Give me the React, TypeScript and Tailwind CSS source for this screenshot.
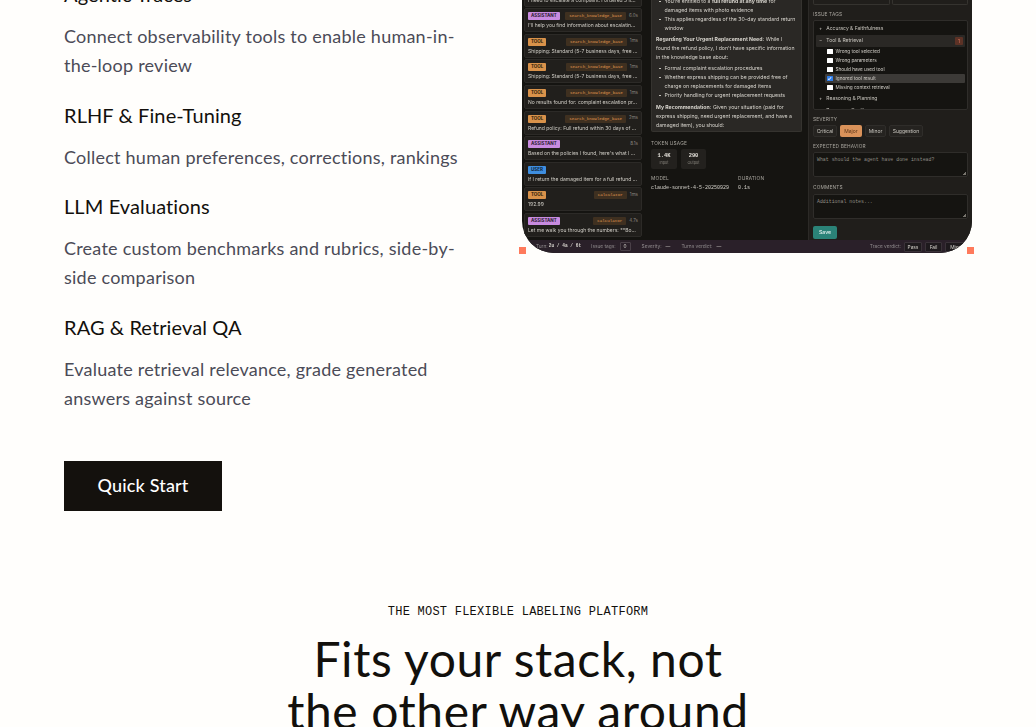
const features = [
  {
    title: 'Agentic Traces',
    body: 'Connect observability tools to enable human-in-the-loop review',
  },
  {
    title: 'RLHF & Fine-Tuning',
    body: 'Collect human preferences, corrections, rankings',
  },
  {
    title: 'LLM Evaluations',
    body: 'Create custom benchmarks and rubrics, side-by-side comparison',
  },
  {
    title: 'RAG & Retrieval QA',
    body: 'Evaluate retrieval relevance, grade generated answers against source',
  },
];

const messages = [
  { role: 'USER', tool: '', time: '', text: 'I need to escalate a complaint. I ordered 3 ite...' },
  { role: 'ASSISTANT', tool: 'search_knowledge_base', time: '6.0s', text: "I'll help you find information about escalating ..." },
  { role: 'TOOL', tool: 'search_knowledge_base', time: '1ms', text: 'Shipping: Standard (5-7 business days, free ...' },
  { role: 'TOOL', tool: 'search_knowledge_base', time: '1ms', text: 'Shipping: Standard (5-7 business days, free ...' },
  { role: 'TOOL', tool: 'search_knowledge_base', time: '1ms', text: 'No results found for: complaint escalation pr...' },
  { role: 'TOOL', tool: 'search_knowledge_base', time: '2ms', text: 'Refund policy: Full refund within 30 days of p...' },
  { role: 'ASSISTANT', tool: '', time: '8.1s', text: "Based on the policies I found, here's what I c..." },
  { role: 'USER', tool: '', time: '', text: 'If I return the damaged item for a full refund ...' },
  { role: 'TOOL', tool: 'calculator', time: '1ms', text: '192.99' },
  { role: 'ASSISTANT', tool: 'calculator', time: '4.7s', text: 'Let me walk you through the numbers: **Boo...' },
];

function roleClass(role: string) {
  if (role === 'ASSISTANT') return 'bg-[#c88be0] text-[#2a1a30]';
  if (role === 'TOOL') return 'bg-[#d9924a] text-[#2a1a08]';
  return 'bg-[#3f8fe0] text-[#0c2238]';
}

function MessageRow({ role, tool, time, text }: (typeof messages)[number]) {
  return (
    <div className="flex h-[24px] shrink-0 flex-col justify-between rounded-[2px] border border-[#2c2a27] bg-[#211f1c] px-[3px] pt-[3px] pb-[2px]">
      <div className="flex h-[8px] items-center justify-between gap-[2px]">
        <span className={`rounded-[1px] px-[3px] text-[4.5px] leading-[8px] font-bold ${roleClass(role)}`}>{role}</span>
        <span className="ml-auto flex items-center gap-[3px]">
          {tool && (
            <span className="rounded-[1px] bg-[#3f3020] px-[4px] font-['Liberation_Mono',monospace] text-[4.2px] leading-[8px] text-[#e09a50]">
              {tool}
            </span>
          )}
          {time && <span className="text-[4.5px] text-[#8a8780]">{time}</span>}
        </span>
      </div>
      <p className="truncate text-[5px] leading-[7px] text-[#cfccc5]">{text}</p>
    </div>
  );
}

function Bullet({ children }: { children: React.ReactNode }) {
  return (
    <li className="flex gap-[4px]">
      <span className="mt-[3.5px] h-[1.5px] w-[1.5px] shrink-0 rounded-full bg-[#d6d3cc]" />
      <span>{children}</span>
    </li>
  );
}

function ConversationCenter() {
  return (
    <div className="flex w-[165px] shrink-0 flex-col border-r border-[#2c2a27] pr-[6px] pl-[7px]">
      <div className="h-[132px] overflow-hidden rounded-b-[2px] border-x border-b border-[#35332f] bg-[#2a2825] px-[4px] text-[5.2px] leading-[9px] text-[#d6d3cc]">
        <ul className="-mt-[3px] pl-[3px]">
          <Bullet>You're entitled to a <b>full refund at any time</b> for damaged items with photo evidence</Bullet>
          <Bullet>This applies regardless of the 30-day standard return window</Bullet>
        </ul>
        <p className="mt-[2px]">
          <b>Regarding Your Urgent Replacement Need:</b> While I found the refund policy, I don't have specific information in the knowledge base about:
        </p>
        <ul className="mt-[2px] pl-[3px]">
          <Bullet>Formal complaint escalation procedures</Bullet>
          <Bullet>Whether express shipping can be provided free of charge on replacements for damaged items</Bullet>
          <Bullet>Priority handling for urgent replacement requests</Bullet>
        </ul>
        <p className="mt-[3px]">
          <b>My Recommendation:</b> Given your situation (paid for express shipping, need urgent replacement, and have a damaged item), you should:
        </p>
      </div>
      <p className="mt-[8px] text-[4.8px] leading-[6px] tracking-[0.04em] text-[#a8a59e]">TOKEN USAGE</p>
      <div className="mt-[3px] flex gap-[4px]">
        <div className="flex h-[20px] w-[26px] flex-col items-center justify-center rounded-[2px] bg-[#23211e]">
          <span className="font-['Liberation_Mono',monospace] text-[5.4px] leading-[8px] font-bold text-[#e6e3dc]">1.4K</span>
          <span className="text-[3.8px] leading-[6px] text-[#85827b]">Input</span>
        </div>
        <div className="flex h-[20px] w-[25px] flex-col items-center justify-center rounded-[2px] bg-[#23211e]">
          <span className="font-['Liberation_Mono',monospace] text-[5.4px] leading-[8px] font-bold text-[#e6e3dc]">290</span>
          <span className="text-[3.8px] leading-[6px] text-[#85827b]">Output</span>
        </div>
      </div>
      <div className="mt-[6px] flex">
        <div className="w-[87px]">
          <p className="text-[4.8px] leading-[6px] tracking-[0.04em] text-[#a8a59e]">MODEL</p>
          <p className="mt-[3px] font-['Liberation_Mono',monospace] text-[5px] leading-[8px] whitespace-nowrap text-[#d6d3cc]">claude-sonnet-4-5-20250929</p>
        </div>
        <div>
          <p className="text-[4.8px] leading-[6px] tracking-[0.04em] text-[#a8a59e]">DURATION</p>
          <p className="mt-[3px] font-['Liberation_Mono',monospace] text-[5px] leading-[8px] text-[#d6d3cc]">0.1s</p>
        </div>
      </div>
    </div>
  );
}

function IssueCheck({ label, checked }: { label: string; checked?: boolean }) {
  return (
    <div className={`flex h-[9px] items-center gap-[3px] rounded-[1px] pl-[2px] ${checked ? 'bg-[#3c3a37]' : ''}`}>
      <span className={`flex h-[5.5px] w-[5.5px] shrink-0 items-center justify-center rounded-[0.5px] ${checked ? 'bg-[#2f7de8]' : 'bg-white'}`}>
        {checked && (
          <svg viewBox="0 0 10 10" className="h-[5px] w-[5px]" fill="none" stroke="white" strokeWidth="2">
            <path d="M2 5.5 4.2 7.5 8 2.5" />
          </svg>
        )}
      </span>
      <span className="text-[4.7px] leading-[9px] text-[#d6d3cc]">{label}</span>
    </div>
  );
}

function FieldBox({ placeholder }: { placeholder: string }) {
  return (
    <div className="relative mt-[3px] h-[25px] rounded-[2px] border border-[#2f2d2a] bg-[#151411] px-[3px] py-[3px] font-['Liberation_Mono',monospace] text-[4.9px] leading-[7px] text-[#8f8c85]">
      {placeholder}
      <span className="absolute right-[1px] bottom-[1px] h-[3px] w-[3px] bg-[linear-gradient(135deg,transparent_50%,#77746d_50%)]" />
    </div>
  );
}

function ReviewPanel() {
  return (
    <div className="flex min-w-0 flex-1 flex-col bg-[#201e1b] px-[4px]">
      <div className="flex gap-[2px]">
        <div className="h-[5px] flex-1 rounded-b-[2px] border border-t-0 border-[#35332f]" />
        <div className="h-[5px] flex-1 rounded-b-[2px] border border-t-0 border-[#35332f]" />
      </div>
      <p className="mt-[6px] text-[4.8px] leading-[6px] tracking-[0.03em] text-[#a8a59e]">ISSUE TAGS</p>
      <div className="mt-[3px] h-[90px] overflow-hidden rounded-[2px] border border-[#2f2d2a] bg-[#151411] px-[2px] pt-[2px]">
        <div className="flex h-[12px] items-center gap-[4px] pl-[3px] text-[5px] text-[#c9c6bf]">
          <span>+</span>Accuracy &amp; Faithfulness
        </div>
        <div className="flex h-[12px] items-center gap-[4px] rounded-[1px] bg-[#2a2825] pl-[3px] text-[5px] text-[#c9c6bf]">
          <span>−</span>Tool &amp; Retrieval
          <span className="mr-[2px] ml-auto rounded-[1px] bg-[#5c3226] px-[3px] text-[4.8px] leading-[8px] text-[#e0775c]">1</span>
        </div>
        <div className="ml-[9px]">
          <IssueCheck label="Wrong tool selected" />
          <IssueCheck label="Wrong parameters" />
          <IssueCheck label="Should have used tool" />
          <IssueCheck label="Ignored tool result" checked />
          <IssueCheck label="Missing context retrieval" />
        </div>
        <div className="mt-[1px] flex h-[12px] items-center gap-[4px] pl-[3px] text-[5px] text-[#c9c6bf]">
          <span>+</span>Reasoning &amp; Planning
        </div>
        <div className="flex h-[12px] items-center gap-[4px] pl-[3px] text-[5px] text-[#c9c6bf]">
          <span>+</span>Response Quality
        </div>
      </div>
      <p className="mt-[6px] text-[4.8px] leading-[6px] tracking-[0.03em] text-[#a8a59e]">SEVERITY</p>
      <div className="mt-[3px] flex h-[12px] gap-[3px] text-[5px] leading-[10px] text-[#c9c6bf]">
        <span className="w-[24px] rounded-[2px] border border-[#2f2d2a] bg-[#252320] text-center">Critical</span>
        <span className="w-[22px] rounded-[2px] bg-[#d9925a] text-center leading-[12px] text-[#5a3418]">Major</span>
        <span className="w-[21px] rounded-[2px] border border-[#2f2d2a] bg-[#252320] text-center">Minor</span>
        <span className="w-[34px] rounded-[2px] border border-[#2f2d2a] bg-[#252320] text-center">Suggestion</span>
      </div>
      <p className="mt-[6px] text-[4.8px] leading-[6px] tracking-[0.03em] text-[#a8a59e]">EXPECTED BEHAVIOR</p>
      <FieldBox placeholder="What should the agent have done instead?" />
      <p className="mt-[7px] h-[7px] text-[4.8px] leading-[6px] tracking-[0.03em] text-[#a8a59e]">COMMENTS</p>
      <FieldBox placeholder="Additional notes..." />
      <span className="mt-[7px] h-[13px] w-[24px] rounded-[2px] bg-[#2b8378] text-center text-[5.2px] leading-[13px] font-medium text-[#e6f2ef]">Save</span>
    </div>
  );
}

function StatusBar() {
  return (
    <div className="flex h-[13px] shrink-0 items-center overflow-hidden bg-[#2a2029] pr-[3px] pl-[14px] text-[4.8px] whitespace-nowrap text-[#8f8a8c]">
      <span>Turn:</span>
      <span className="ml-[1px] font-['Liberation_Mono',monospace] text-[4.5px] font-bold text-[#d6d3cc]">2u / 4a / 6t</span>
      <span className="ml-[10px]">Issue tags:</span>
      <span className="ml-[4px] rounded-[1px] border border-[#4a4048] px-[3px] leading-[7px] text-[#d6d3cc]">0</span>
      <span className="ml-[11px]">Severity:</span>
      <span className="ml-[4px] text-[#d6d3cc]">—</span>
      <span className="ml-[11px]">Turns verdict:</span>
      <span className="ml-[4px] text-[#d6d3cc]">—</span>
      <span className="ml-auto">Trace verdict:</span>
      <span className="ml-[3px] w-[18px] rounded-[1px] border border-[#3a3238] bg-[#1e1a1d] text-center leading-[8px] text-[#d6d3cc]">Pass</span>
      <span className="ml-[3px] w-[17px] rounded-[1px] border border-[#3a3238] bg-[#1e1a1d] text-center leading-[8px] text-[#d6d3cc]">Fail</span>
      <span className="ml-[3px] w-[24px] rounded-[1px] border border-[#3a3238] bg-[#1e1a1d] text-center leading-[8px] text-[#d6d3cc]">Mixed</span>
    </div>
  );
}

export default function App() {
  return (
    <div className="h-[727px] overflow-hidden bg-[#fffefc] font-['Lato',sans-serif] text-[#12100c]">
      {/* Feature list and product shot */}
      <section className="-mt-[21px] flex px-[64px]">
        <div className="w-[396px] shrink-0">
          {features.map((f) => (
            <div key={f.title} className="mb-[20px] last:mb-0">
              <h3 className="text-[20px] leading-[30px] tracking-[0.005em]">{f.title}</h3>
              <p className="mt-[13px] text-[18px] leading-[28.8px] tracking-[0.013em] text-[#4b4b57]">{f.body}</p>
            </div>
          ))}
          <a className="mt-[48px] flex h-[50px] w-[158px] items-center justify-center bg-[#14110d] text-[18px] font-medium tracking-[0.01em] text-white">
            Quick Start
          </a>
        </div>

        <div className="relative ml-[62px] h-[274px] w-[450px] shrink-0">
          <div className="flex h-full flex-col overflow-hidden rounded-b-[32px] bg-[#151411] font-['Inter',sans-serif] blur-[0.3px]">
            <div className="flex min-h-0 flex-1 items-end">
              <div className="flex w-[122px] shrink-0 flex-col gap-[1.6px] pr-[2px] pb-[3px] pl-[2px]">
                {messages.map((m, i) => (
                  <MessageRow key={i} {...m} />
                ))}
              </div>
              <div className="flex h-full pt-[21px]">
                <ConversationCenter />
              </div>
              <div className="flex h-full min-w-0 flex-1 pt-[21px]">
                <ReviewPanel />
              </div>
            </div>
            <StatusBar />
          </div>
          <span className="absolute -bottom-[1px] -left-[3px] h-[7px] w-[7px] bg-[#ff7a5c]" />
          <span className="absolute -right-[2px] -bottom-[1px] h-[7px] w-[7px] bg-[#ff7a5c]" />
        </div>
      </section>

      {/* Next section heading */}
      <section className="mt-[93px] text-center">
        <p className="font-['Liberation_Mono',monospace] text-[12px] leading-[16px] tracking-[0.02em]">THE MOST FLEXIBLE LABELING PLATFORM</p>
        <h2 className="mt-[13px] text-[48px] leading-[52.8px] tracking-[0.012em]">
          Fits your stack, not
          <br />
          the other way around
        </h2>
      </section>
    </div>
  );
}
